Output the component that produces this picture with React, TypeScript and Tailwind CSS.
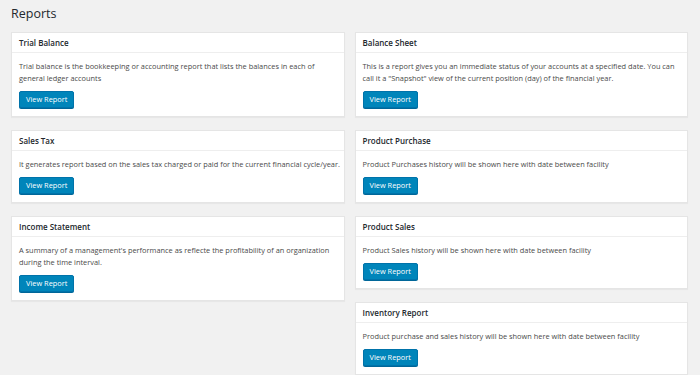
import React from "react";

type Report = { title: string; desc: string };

const left: Report[] = [
  {
    title: "Trial Balance",
    desc: "Trial balance is the bookkeeping or accounting report that lists the balances in each of general ledger accounts",
  },
  {
    title: "Sales Tax",
    desc: "It generates report based on the sales tax charged or paid for the current financial cycle/year.",
  },
  {
    title: "Income Statement",
    desc: "A summary of a management's performance as reflecte the profitability of an organization during the time interval.",
  },
];

const right: Report[] = [
  {
    title: "Balance Sheet",
    desc: 'This is a report gives you an immediate status of your accounts at a specified date. You can call it a "Snapshot" view of the current position (day) of the financial year.',
  },
  {
    title: "Product Purchase",
    desc: "Product Purchases history will be shown here with date between facility",
  },
  {
    title: "Product Sales",
    desc: "Product Sales history will be shown here with date between facility",
  },
  {
    title: "Inventory Report",
    desc: "Product purchase and sales history will be shown here with date between facility",
  },
];

function Card({ r }: { r: Report }) {
  return (
    <div className="bg-white border border-[#e5e5e5] shadow-[0_1px_1px_rgba(0,0,0,0.04)]">
      <div className="h-[20px] flex items-center px-[7px] border-b border-[#eeeeee] text-[8px] font-semibold text-[#23282d] leading-none">
        {r.title}
      </div>
      <div className="pl-[7px] pr-[3px] pt-[7px] pb-[8px]">
        <p className="text-[7.4px] leading-[12px] text-[#4a4a4a]">{r.desc}</p>
        <button className="mt-[7px] h-[17px] px-[6px] rounded-[2px] bg-[#0085ba] border border-[#0073aa] shadow-[0_1px_0_#006799] text-white text-[7.4px] leading-none flex items-center">
          View Report
        </button>
      </div>
    </div>
  );
}

export default function App() {
  return (
    <div
      className="min-h-[375px] bg-[#f1f1f1] pl-[11px] pr-[12px] pt-[5px]"
      style={{ fontFamily: '"Open Sans", "Liberation Sans", sans-serif' }}
    >
      <h1 className="text-[12.5px] leading-[18px] text-[#23282d] font-normal mb-[9px]">Reports</h1>
      <div className="grid grid-cols-2 gap-x-[10px] items-start">
        <div className="flex flex-col gap-[13px]">
          {left.map((r) => (
            <Card key={r.title} r={r} />
          ))}
        </div>
        <div className="flex flex-col gap-[13px]">
          {right.map((r) => (
            <Card key={r.title} r={r} />
          ))}
        </div>
      </div>
    </div>
  );
}
